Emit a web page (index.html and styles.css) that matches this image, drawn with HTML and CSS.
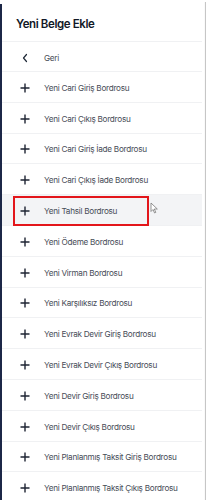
FILE: index.html
```html
<!DOCTYPE html>
<html>
<head>
<meta charset="utf-8">
<link rel="stylesheet" href="styles.css">
</head>
<body>
<div class="frame">
  <div class="panel">
    <div class="header">Yeni Belge Ekle</div>
    <ul class="list">
      <li class="row back"><span class="icon"><svg width="10" height="10" viewBox="0 0 10 10"><path d="M6.5 1.5 L3.5 5 L6.5 8.5" fill="none" stroke="#1f2937" stroke-width="1.2" stroke-linecap="round" stroke-linejoin="round"/></svg></span><span class="label">Geri</span></li>
      <li class="row"><span class="icon"><svg width="10" height="10" viewBox="0 0 10 10"><path d="M5 0.5 V9.5 M0.5 5 H9.5" stroke="#1e2433" stroke-width="1.4"/></svg></span><span class="label">Yeni Cari Giriş Bordrosu</span></li>
      <li class="row"><span class="icon"><svg width="10" height="10" viewBox="0 0 10 10"><path d="M5 0.5 V9.5 M0.5 5 H9.5" stroke="#1e2433" stroke-width="1.4"/></svg></span><span class="label">Yeni Cari Çıkış Bordrosu</span></li>
      <li class="row"><span class="icon"><svg width="10" height="10" viewBox="0 0 10 10"><path d="M5 0.5 V9.5 M0.5 5 H9.5" stroke="#1e2433" stroke-width="1.4"/></svg></span><span class="label">Yeni Cari Giriş İade Bordrosu</span></li>
      <li class="row"><span class="icon"><svg width="10" height="10" viewBox="0 0 10 10"><path d="M5 0.5 V9.5 M0.5 5 H9.5" stroke="#1e2433" stroke-width="1.4"/></svg></span><span class="label">Yeni Cari Çıkış İade Bordrosu</span></li>
      <li class="row active"><span class="icon"><svg width="10" height="10" viewBox="0 0 10 10"><path d="M5 0.5 V9.5 M0.5 5 H9.5" stroke="#1e2433" stroke-width="1.4"/></svg></span><span class="label">Yeni Tahsil Bordrosu</span>
        <span class="mark"></span>
        <svg class="cursor" width="9" height="12" viewBox="0 0 9 12"><path d="M1 1 L1 9.5 L3 7.5 L4.6 11 L5.8 10.4 L4.3 7 L7.3 7 Z" fill="#fff" stroke="#7a7a7a" stroke-width="0.8" stroke-linejoin="round"/></svg>
      </li>
      <li class="row"><span class="icon"><svg width="10" height="10" viewBox="0 0 10 10"><path d="M5 0.5 V9.5 M0.5 5 H9.5" stroke="#1e2433" stroke-width="1.4"/></svg></span><span class="label">Yeni Ödeme Bordrosu</span></li>
      <li class="row"><span class="icon"><svg width="10" height="10" viewBox="0 0 10 10"><path d="M5 0.5 V9.5 M0.5 5 H9.5" stroke="#1e2433" stroke-width="1.4"/></svg></span><span class="label">Yeni Virman Bordrosu</span></li>
      <li class="row"><span class="icon"><svg width="10" height="10" viewBox="0 0 10 10"><path d="M5 0.5 V9.5 M0.5 5 H9.5" stroke="#1e2433" stroke-width="1.4"/></svg></span><span class="label">Yeni Karşılıksız Bordrosu</span></li>
      <li class="row"><span class="icon"><svg width="10" height="10" viewBox="0 0 10 10"><path d="M5 0.5 V9.5 M0.5 5 H9.5" stroke="#1e2433" stroke-width="1.4"/></svg></span><span class="label">Yeni Evrak Devir Giriş Bordrosu</span></li>
      <li class="row"><span class="icon"><svg width="10" height="10" viewBox="0 0 10 10"><path d="M5 0.5 V9.5 M0.5 5 H9.5" stroke="#1e2433" stroke-width="1.4"/></svg></span><span class="label">Yeni Evrak Devir Çıkış Bordrosu</span></li>
      <li class="row"><span class="icon"><svg width="10" height="10" viewBox="0 0 10 10"><path d="M5 0.5 V9.5 M0.5 5 H9.5" stroke="#1e2433" stroke-width="1.4"/></svg></span><span class="label">Yeni Devir Giriş Bordrosu</span></li>
      <li class="row"><span class="icon"><svg width="10" height="10" viewBox="0 0 10 10"><path d="M5 0.5 V9.5 M0.5 5 H9.5" stroke="#1e2433" stroke-width="1.4"/></svg></span><span class="label">Yeni Devir Çıkış Bordrosu</span></li>
      <li class="row"><span class="icon"><svg width="10" height="10" viewBox="0 0 10 10"><path d="M5 0.5 V9.5 M0.5 5 H9.5" stroke="#1e2433" stroke-width="1.4"/></svg></span><span class="label">Yeni Planlanmış Taksit Giriş Bordrosu</span></li>
      <li class="row"><span class="icon"><svg width="10" height="10" viewBox="0 0 10 10"><path d="M5 0.5 V9.5 M0.5 5 H9.5" stroke="#1e2433" stroke-width="1.4"/></svg></span><span class="label">Yeni Planlanmış Taksit Çıkış Bordrosu</span></li>
    </ul>
  </div>
  <div class="scrollbar"></div>
</div>
</body>
</html>
```
FILE: styles.css
```css
* { box-sizing: border-box; }
html, body { margin: 0; padding: 0; background: #fff; }
body { font-family: Inter, "Noto Sans", sans-serif; width: 208px; height: 500px; overflow: hidden; }
.frame { display: flex; height: 500px; padding-top: 4px; }
.panel { flex: 1; min-width: 0; border-left: 2px solid #1c2747; }
.header { height: 38px; display: flex; align-items: center; padding-left: 14px; padding-top: 2px; font-size: 11.5px; letter-spacing: -0.4px; font-weight: 600; color: #111827; border-bottom: 1px solid #f0f1f3; margin-right: 2px; }
.list { list-style: none; margin: 0; padding: 0; margin-right: 2px; }
.row { position: relative; height: 30.8px; display: flex; align-items: center; padding-top: 2px; border-bottom: 1px solid #f0f1f3; font-size: 8.2px; letter-spacing: -0.28px; color: #474c57; }
.row.back { height: 30px; }
.icon { width: 42px; display: flex; justify-content: center; padding-left: 3px; }
.label { white-space: nowrap; }
.row.active { background: #f3f4f6; }
.mark { position: absolute; left: 11px; top: 1px; width: 136px; height: 30px; border: 2px solid #e3161b; }
.cursor { position: absolute; left: 148px; top: 7px; }
.scrollbar { width: 4px; margin-top: -2px; background: linear-gradient(to right, #fafafa 0, #fafafa 1px, #c6c6c6 1px, #c6c6c6 2px, #fff 2px); }
```
